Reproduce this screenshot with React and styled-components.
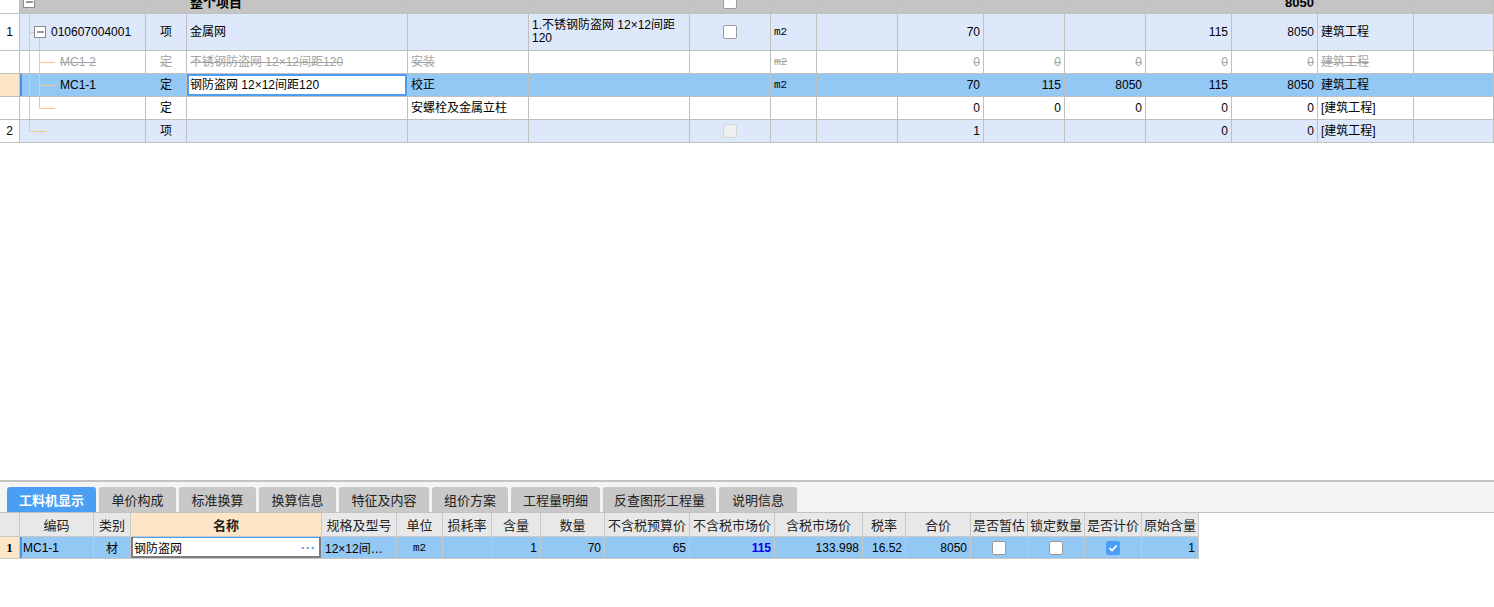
import React from 'react';
import styled, { createGlobalStyle, css } from 'styled-components';

const LINE = '#c0c0c0';
const TREE = '#f7c68a';

const GlobalStyle = createGlobalStyle`
  html, body {
    margin: 0;
    padding: 0;
    background: #fff;
  }
  body {
    font-family: "Liberation Sans", "Noto Sans CJK SC", sans-serif;
    font-size: 12px;
    color: #000;
  }
`;

const justify = { left: 'flex-start', center: 'center', right: 'flex-end' };

const Page = styled.div`
  height: 100vh;
  display: flex;
  flex-direction: column;
  overflow: hidden;
`;

const TopArea = styled.div`
  flex: 1 1 auto;
  overflow: hidden;
  background: #fff;
`;

// grid is scrolled down a little, the root row is half hidden
const TreeGrid = styled.div`
  margin-top: -9px;
`;

const Row = styled.div`
  display: flex;
  height: ${p => p.$h}px;
  background: ${p => p.$bg};
`;

const Cell = styled.div`
  box-sizing: border-box;
  flex: ${p => (p.$grow ? '1 1 0' : `0 0 ${p.$w}px`)};
  min-width: 0;
  display: flex;
  align-items: center;
  justify-content: ${p => justify[p.$align]};
  gap: 2px;
  padding: 0 ${p => (p.$flush ? 0 : 3)}px;
  border-right: 1px solid ${LINE};
  border-bottom: 1px solid ${LINE};
  background: ${p => p.$bg || 'transparent'};
  white-space: ${p => (p.$wrap ? 'pre-line' : 'nowrap')};
  line-height: 13px;
  overflow: hidden;
  ${p => p.$struck && css`
    color: #a3a3a3;
    text-decoration: line-through;
  `}
  ${p => p.$editing && css`
    background: #fff;
    box-shadow: inset 0 0 0 2px #4b9ef3;
  `}
  ${p => p.$marked && css`
    box-shadow: inset 2px 0 0 #4a92e6;
  `}
`;

const Bold = styled.span`
  font-weight: bold;
  font-size: 13px;
`;

const Unit = styled.span`
  font-family: "Liberation Mono", monospace;
  font-size: 11px;
`;

const Box = styled.span`
  box-sizing: border-box;
  display: inline-flex;
  align-items: center;
  justify-content: center;
  width: 14px;
  height: 14px;
  border-radius: 2px;
  border: 1px solid ${p => (p.$disabled ? '#d6d6d6' : p.$checked ? '#4a9ef5' : '#9a9a9a')};
  background: ${p => (p.$disabled ? '#efefef' : p.$checked ? '#4a9ef5' : '#fff')};
`;

const CheckBox = ({ checked, disabled }) => (
  <Box $checked={checked} $disabled={disabled}>
    {checked && (
      <svg width="10" height="10" viewBox="0 0 10 10">
        <path d="M1.5 5.2 L4 7.5 L8.6 2.6" fill="none" stroke="#fff" strokeWidth="1.8" />
      </svg>
    )}
  </Box>
);

const Minus = ({ x, y }) => (
  <g>
    <rect x={x + 0.5} y={y + 0.5} width="11" height="11" fill="#fff" stroke="#8a8a8a" />
    <line x1={x + 3} y1={y + 6} x2={x + 10} y2={y + 6} stroke="#333" />
  </g>
);

// tree guide drawn per row, the way tree grids do it
const TreeGuide = ({ kind, h }) => {
  const c = Math.round(h / 2) + 0.5;
  if (kind === 'root') {
    return (
      <svg width="40" height={h}>
        <line x1="9.5" y1={c} x2="9.5" y2={h} stroke={TREE} />
        <Minus x={3} y={c - 6.5} />
      </svg>
    );
  }
  if (kind === 'parent') {
    return (
      <svg width="29" height={h}>
        <line x1="9.5" y1="0" x2="9.5" y2={h} stroke={TREE} />
        <line x1="9.5" y1={c} x2="14" y2={c} stroke={TREE} />
        <line x1="19.5" y1={c} x2="19.5" y2={h} stroke={TREE} />
        <Minus x={14} y={c - 6.5} />
      </svg>
    );
  }
  if (kind === 'child' || kind === 'childLast') {
    return (
      <svg width="38" height={h}>
        <line x1="9.5" y1="0" x2="9.5" y2={h} stroke={TREE} />
        <line x1="19.5" y1="0" x2="19.5" y2={kind === 'child' ? h : c} stroke={TREE} />
        <line x1="19.5" y1={c} x2="35" y2={c} stroke={TREE} />
      </svg>
    );
  }
  return (
    <svg width="40" height={h}>
      <line x1="9.5" y1="0" x2="9.5" y2={c} stroke={TREE} />
      <line x1="9.5" y1={c} x2="26" y2={c} stroke={TREE} />
    </svg>
  );
};

const topCols = [
  { w: 20, align: 'center' },
  { w: 126, align: 'left', flush: true },
  { w: 41, align: 'center' },
  { w: 221, align: 'left' },
  { w: 121, align: 'left' },
  { w: 161, align: 'left' },
  { w: 81, align: 'center' },
  { w: 46, align: 'left' },
  { w: 81, align: 'right' },
  { w: 86, align: 'right' },
  { w: 81, align: 'right' },
  { w: 81, align: 'right' },
  { w: 86, align: 'right' },
  { w: 86, align: 'right' },
  { w: 96, align: 'left' },
  { w: 0, align: 'left', grow: true },
];

const rowBg = {
  root: '#c4c4c4',
  item: '#dde9fb',
  plain: '#fff',
  selected: '#93c7f4',
};

const code = (kind, h, text) => (
  <>
    <TreeGuide kind={kind} h={h - 1} />
    {text && <span>{text}</span>}
  </>
);

const topRows = [
  {
    kind: 'root', h: 23,
    cells: ['', code('root', 23), '', <Bold>整个项目</Bold>, '', '', <CheckBox />, '', '', '', '', '', '', <Bold>8050</Bold>, '', ''],
  },
  {
    kind: 'item', h: 37,
    cells: ['1', code('parent', 37, '010607004001'), '项', '金属网', '', '1.不锈钢防盗网 12×12间距\n120', <CheckBox />, <Unit>m2</Unit>, '', '70', '', '', '115', '8050', '建筑工程', ''],
  },
  {
    kind: 'plain', h: 23, struck: true,
    cells: ['', code('child', 23, 'MC1-2'), '定', '不锈钢防盗网 12×12间距120', '安装', '', '', <Unit>m2</Unit>, '', '0', '0', '0', '0', '0', '建筑工程', ''],
  },
  {
    kind: 'selected', h: 23, editCol: 3,
    cells: ['', code('child', 23, 'MC1-1'), '定', '钢防盗网 12×12间距120', '校正', '', '', <Unit>m2</Unit>, '', '70', '115', '8050', '115', '8050', '建筑工程', ''],
  },
  {
    kind: 'plain', h: 23,
    cells: ['', code('childLast', 23), '定', '', '安螺栓及金属立柱', '', '', '', '', '0', '0', '0', '0', '0', '[建筑工程]', ''],
  },
  {
    kind: 'item', h: 23,
    cells: ['2', code('last', 23), '项', '', '', '', <CheckBox disabled />, '', '', '1', '', '', '0', '0', '[建筑工程]', ''],
  },
];

const BottomPanel = styled.div`
  box-sizing: border-box;
  flex: 0 0 127px;
  border-top: 2px solid #c3c3c3;
  background: #fff;
`;

const TabBar = styled.div`
  box-sizing: border-box;
  height: 31px;
  display: flex;
  align-items: flex-end;
  gap: 3px;
  padding-left: 7px;
  background: #f4f4f4;
  border-bottom: 1px solid #c3c3c3;
`;

const Tab = styled.div`
  box-sizing: border-box;
  width: ${p => p.$w}px;
  height: 25px;
  display: flex;
  align-items: center;
  justify-content: center;
  border-radius: 3px 3px 0 0;
  font-family: "Noto Sans CJK SC", sans-serif;
  font-size: 13px;
  background: ${p => (p.$active ? '#4a9ff5' : '#c8c8c8')};
  color: ${p => (p.$active ? '#fff' : '#222')};
  font-weight: ${p => (p.$active ? 'bold' : 'normal')};
`;

const tabs = [
  ['工料机显示', 89], ['单价构成', 77], ['标准换算', 77], ['换算信息', 77], ['特征及内容', 90],
  ['组价方案', 76], ['工程量明细', 89], ['反查图形工程量', 113], ['说明信息', 78],
];

const PartGrid = styled.div`
  width: 1199px;
`;

const PartRow = styled.div`
  display: flex;
  height: ${p => p.$h}px;
  background: ${p => p.$bg};
`;

const PartCell = styled.div`
  box-sizing: border-box;
  flex: 0 0 ${p => p.$w}px;
  display: flex;
  align-items: center;
  justify-content: ${p => justify[p.$align]};
  padding: 0 3px;
  border-right: 1px solid #c8c8c8;
  border-bottom: 1px solid #c8c8c8;
  white-space: nowrap;
  overflow: hidden;
  background: ${p => p.$bg || 'transparent'};
  ${p => p.$marked && css`box-shadow: inset 2px 0 0 #4a92e6;`}
`;

const HeadCell = styled(PartCell)`
  justify-content: center;
  font-size: 13px;
  color: #222;
  background: ${p => (p.$key ? '#fde6c8' : '#e8e8e8')};
  font-weight: ${p => (p.$key ? 'bold' : 'normal')};
`;

const Editor = styled(PartCell)`
  justify-content: space-between;
  background: #fff;
  box-shadow: inset 2px 0 #7d7d7d, inset -2px 0 #7d7d7d, inset 0 -2px #7d7d7d, inset 0 1px #4a9ef0;
`;

const More = styled.span`
  color: #4a8fd8;
  font-weight: bold;
  letter-spacing: 1px;
  margin-right: 2px;
`;

const RowNo = styled.span`
  font-family: "Liberation Serif", serif;
  font-weight: bold;
  font-size: 13px;
`;

const Price = styled.span`
  color: #0000ee;
  font-weight: bold;
`;

const partCols = [
  { w: 20, label: '', align: 'center' },
  { w: 74, label: '编码', align: 'left' },
  { w: 37, label: '类别', align: 'center' },
  { w: 191, label: '名称', align: 'left', key: true },
  { w: 75, label: '规格及型号', align: 'left' },
  { w: 46, label: '单位', align: 'center' },
  { w: 49, label: '损耗率', align: 'right' },
  { w: 49, label: '含量', align: 'right' },
  { w: 64, label: '数量', align: 'right' },
  { w: 85, label: '不含税预算价', align: 'right' },
  { w: 85, label: '不含税市场价', align: 'right' },
  { w: 88, label: '含税市场价', align: 'right' },
  { w: 43, label: '税率', align: 'right' },
  { w: 65, label: '合价', align: 'right' },
  { w: 57, label: '是否暂估', align: 'center' },
  { w: 57, label: '锁定数量', align: 'center' },
  { w: 57, label: '是否计价', align: 'center' },
  { w: 57, label: '原始含量', align: 'right' },
];

const partRow = [
  <RowNo>1</RowNo>, 'MC1-1', '材', null, '12×12间…', <Unit>m2</Unit>, '', '1', '70', '65',
  <Price>115</Price>, '133.998', '16.52', '8050', <CheckBox />, <CheckBox />, <CheckBox checked />, '1',
];

export default function App() {
  return (
    <Page>
      <GlobalStyle />
      <TopArea>
        <TreeGrid>
          {topRows.map((r, ri) => (
            <Row key={ri} $h={r.h} $bg={rowBg[r.kind]}>
              {topCols.map((c, ci) => (
                <Cell
                  key={ci}
                  $w={c.w}
                  $grow={c.grow}
                  $align={c.align}
                  $flush={c.flush}
                  $wrap={ci === 5}
                  $struck={r.struck}
                  $editing={r.editCol === ci}
                  $marked={r.kind === 'selected' && ci === 1}
                  $bg={ci === 0 ? (r.kind === 'selected' ? '#fde6c8' : '#fff') : undefined}
                >
                  {r.cells[ci]}
                </Cell>
              ))}
            </Row>
          ))}
        </TreeGrid>
      </TopArea>

      <BottomPanel>
        <TabBar>
          {tabs.map(([t, w], i) => (
            <Tab key={t} $active={i === 0} $w={w}>{t}</Tab>
          ))}
        </TabBar>
        <PartGrid>
          <PartRow $h={24} $bg="#e8e8e8">
            {partCols.map((c, i) => (
              <HeadCell key={i} $w={c.w} $key={c.key}>{c.label}</HeadCell>
            ))}
          </PartRow>
          <PartRow $h={22} $bg="#93c7f4">
            {partCols.map((c, i) =>
              i === 3 ? (
                <Editor key={i} $w={c.w} $align="left">
                  <span>钢防盗网</span>
                  <More>···</More>
                </Editor>
              ) : (
                <PartCell
                  key={i}
                  $w={c.w}
                  $align={c.align}
                  $marked={i === 1}
                  $bg={i === 0 ? '#fde6c8' : undefined}
                >
                  {partRow[i]}
                </PartCell>
              )
            )}
          </PartRow>
        </PartGrid>
      </BottomPanel>
    </Page>
  );
}
